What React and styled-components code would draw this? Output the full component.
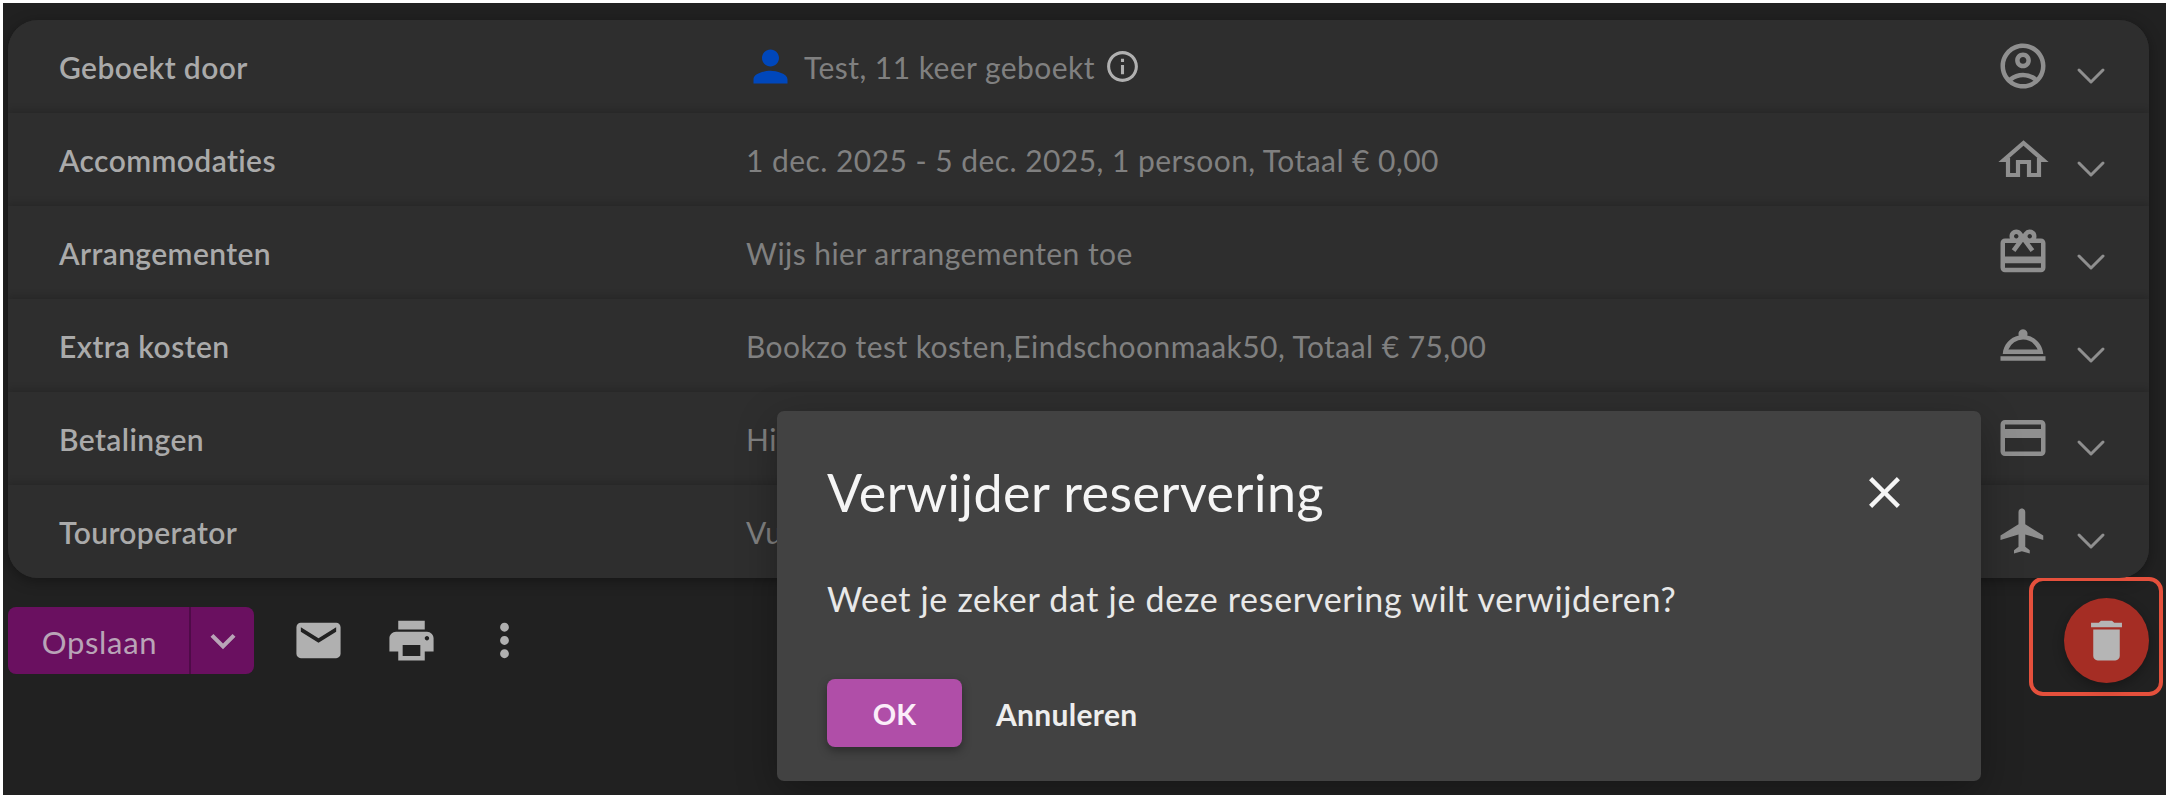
import React from 'react';
import styled, { createGlobalStyle } from 'styled-components';
import {
    MdClose,
    MdCreditCard,
    MdDelete,
    MdEmail,
    MdExpandMore,
    MdFlight,
    MdInfoOutline,
    MdMoreVert,
    MdOutlineAccountCircle,
    MdOutlineCardGiftcard,
    MdOutlineRoomService,
    MdPerson,
    MdPrint,
} from 'react-icons/md';
import { ChevronDown } from 'lucide-react';

const GlobalStyle = createGlobalStyle`
  html, body {
    margin: 0;
    background: #ffffff;
    font-family: "Lato", "Open Sans", sans-serif;
  }
  * { box-sizing: border-box; }
`;

const Frame = styled.div`
  position: relative;
  margin: 3px;
  height: 792px;
  padding: 17px 0 0 5px;
  background: #212121;
  overflow: hidden;
`;

const Card = styled.div`
  width: 2141px;
  border-radius: 30px;
  overflow: hidden;
  background: #2e2e2e;
  box-shadow: 0 3px 14px rgba(0, 0, 0, 0.35);
`;

const Row = styled.div`
  position: relative;
  display: flex;
  align-items: center;
  height: 93px;
  padding: 0 34px 0 51px;
  background: #2e2e2e;
  box-shadow: 0 -3px 7px rgba(0, 0, 0, 0.16);
`;

const Label = styled.div`
  width: 687px;
  font-size: 30px;
  font-weight: 600;
  letter-spacing: 0.4px;
  color: #aaaaaa;
`;

const Value = styled.div`
  flex: 1;
  display: flex;
  align-items: center;
  font-size: 30px;
  font-weight: 400;
  letter-spacing: 0.45px;
  color: #808080;
`;

const PersonIcon = styled(MdPerson)`
  margin: 0 8px 0 -1px;
  color: #0047bb;
`;

const InfoIcon = styled(MdInfoOutline)`
  margin-left: 9px;
  color: #b0b0b0;
`;

const RowIcon = styled.div`
  display: flex;
  margin: -2px 17px 0 0;
  color: #8f8f8f;
`;

const RowChevron = styled(ChevronDown)`
  margin-top: 18px;
  color: #8f8f8f;
`;

const Toolbar = styled.div`
  display: flex;
  justify-content: space-between;
  align-items: flex-start;
  padding-right: 3px;
`;

const ToolbarLeft = styled.div`
  display: flex;
  align-items: center;
  margin-top: 29px;
`;

const SplitButton = styled.div`
  display: flex;
  width: 246px;
  height: 67px;
  border-radius: 8px;
  overflow: hidden;
  margin-right: 18px;
  background: #6a1060;
  color: #b9a4b7;
`;

const SaveLabel = styled.div`
  flex: 1;
  display: flex;
  align-items: center;
  justify-content: center;
  padding: 2px 0 0 2px;
  font-size: 31px;
  letter-spacing: 0.7px;
`;

const SplitArrow = styled.div`
  width: 65px;
  display: flex;
  align-items: center;
  justify-content: center;
  border-left: 2px solid #4f0b48;
`;

const ToolIcon = styled.div`
  width: 93px;
  display: flex;
  justify-content: center;
  color: #b0b0b0;
`;

const Highlight = styled.div`
  width: 134px;
  height: 119px;
  margin-top: -1px;
  padding: 17px 0 0 31px;
  border: 4px solid #e5503c;
  border-radius: 14px;
`;

const DeleteButton = styled.div`
  width: 85px;
  height: 85px;
  border-radius: 50%;
  display: flex;
  align-items: center;
  justify-content: center;
  background: #a52d24;
  color: #b5b5b5;
  box-shadow: 0 4px 12px rgba(0, 0, 0, 0.3);
`;

const Dialog = styled.div`
  position: absolute;
  top: 408px;
  left: 774px;
  width: 1204px;
  height: 370px;
  padding: 49px 70px 0 50px;
  border-radius: 7px;
  background: #424242;
  box-shadow: 0 12px 40px rgba(0, 0, 0, 0.3);
`;

const DialogHeader = styled.div`
  display: flex;
  justify-content: space-between;
  align-items: center;
  height: 64px;
  color: #f5f5f5;
`;

const DialogTitle = styled.div`
  font-size: 52px;
  font-weight: 400;
  line-height: 64px;
  letter-spacing: 0.5px;
`;

const DialogBody = styled.div`
  margin-top: 53px;
  font-size: 34px;
  line-height: 44px;
  letter-spacing: 0.7px;
  color: #e8e8e8;
`;

const DialogActions = styled.div`
  display: flex;
  align-items: center;
  gap: 34px;
  margin-top: 58px;
`;

const OkButton = styled.div`
  width: 135px;
  height: 68px;
  display: flex;
  align-items: center;
  justify-content: center;
  border-radius: 8px;
  background: #b04ea8;
  color: #fbeef9;
  font-size: 29px;
  font-weight: 700;
  box-shadow: 0 4px 10px rgba(0, 0, 0, 0.35);
`;

const CancelButton = styled.div`
  padding-top: 1px;
  font-size: 30px;
  font-weight: 700;
  letter-spacing: 0.3px;
  color: #eeeeee;
`;

// no icon in the packages has this door, so drawn by hand
const HouseIcon = () => (
    <svg width="54" height="54" viewBox="0 0 54 54" fill="none" stroke="currentColor" strokeWidth="4.2">
        <path d="M22 43 H12 V28 H8 L27.5 11 L47 28 H43 V43 H33 V30 H22 Z" />
    </svg>
);

const rows = [
    { label: 'Geboekt door', icon: <MdOutlineAccountCircle size={54} />, booked: true },
    { label: 'Accommodaties', icon: <HouseIcon />, value: '1 dec. 2025 - 5 dec. 2025, 1 persoon, Totaal € 0,00' },
    { label: 'Arrangementen', icon: <MdOutlineCardGiftcard size={54} />, value: 'Wijs hier arrangementen toe' },
    { label: 'Extra kosten', icon: <MdOutlineRoomService size={54} />, value: 'Bookzo test kosten,Eindschoonmaak50, Totaal € 75,00' },
    { label: 'Betalingen', icon: <MdCreditCard size={54} />, value: 'Hier kun je betalingen toevoegen' },
    { label: 'Touroperator', icon: <MdFlight size={54} />, value: 'Vul hier de touroperator in' },
];

const App = () => {
    return (
        <Frame>
            <GlobalStyle />
            <Card>
                {rows.map((row) => (
                    <Row key={row.label}>
                        <Label>{row.label}</Label>
                        {row.booked ? (
                            <Value>
                                <PersonIcon size={51} />
                                Test, 11 keer geboekt
                                <InfoIcon size={37} />
                            </Value>
                        ) : (
                            <Value>{row.value}</Value>
                        )}
                        <RowIcon>{row.icon}</RowIcon>
                        <RowChevron size={48} strokeWidth={1.5} />
                    </Row>
                ))}
            </Card>
            <Toolbar>
                <ToolbarLeft>
                    <SplitButton>
                        <SaveLabel>Opslaan</SaveLabel>
                        <SplitArrow>
                            <MdExpandMore size={50} />
                        </SplitArrow>
                    </SplitButton>
                    <ToolIcon><MdEmail size={53} /></ToolIcon>
                    <ToolIcon><MdPrint size={53} /></ToolIcon>
                    <ToolIcon><MdMoreVert size={53} /></ToolIcon>
                </ToolbarLeft>
                <Highlight>
                    <DeleteButton>
                        <MdDelete size={53} />
                    </DeleteButton>
                </Highlight>
            </Toolbar>
            <Dialog>
                <DialogHeader>
                    <DialogTitle>Verwijder reservering</DialogTitle>
                    <MdClose size={53} />
                </DialogHeader>
                <DialogBody>Weet je zeker dat je deze reservering wilt verwijderen?</DialogBody>
                <DialogActions>
                    <OkButton>OK</OkButton>
                    <CancelButton>Annuleren</CancelButton>
                </DialogActions>
            </Dialog>
        </Frame>
    );
};

export default App;
